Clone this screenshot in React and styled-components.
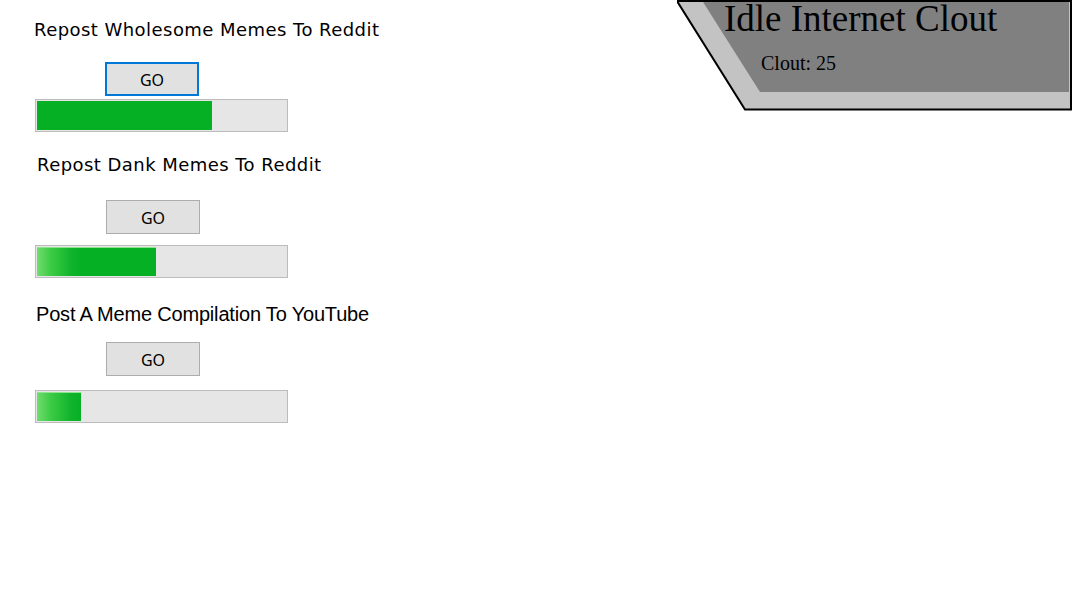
import React from "react";
import styled, { createGlobalStyle } from "styled-components";

const Global = createGlobalStyle`
  html, body { margin: 0; padding: 0; background: #ffffff; }
  body { font-family: "Liberation Serif", serif; }
`;

const Page = styled.div`
  display: flex;
  align-items: flex-start;
  width: 1072px;
  min-height: 603px;
`;

const Column = styled.div`
  display: flex;
  flex-direction: column;
  align-items: flex-start;
  padding-left: 35px;
`;

const Title = styled.div`
  font-family: ${(p) => (p.$comic ? '"Comic Sans MS", "DejaVu Sans", sans-serif' : '"Liberation Sans", Arial, sans-serif')};
  font-size: ${(p) => (p.$comic ? "18px" : "20px")};
  letter-spacing: ${(p) => (p.$comic ? "0.45px" : "-0.18px")};
  line-height: 24px;
  height: 24px;
  color: #000;
  white-space: nowrap;
  margin-top: ${(p) => p.$top}px;
  margin-left: ${(p) => p.$left}px;
`;

const GoButton = styled.button`
  box-sizing: border-box;
  width: 94px;
  height: 34px;
  margin-top: ${(p) => p.$top}px;
  margin-left: ${(p) => p.$left}px;
  padding: 0;
  background: #e1e1e1;
  border: ${(p) => (p.$focused ? "2px solid #0078d7" : "1px solid #adadad")};
  border-radius: 0;
  font-family: "Noto Sans", "Open Sans", sans-serif;
  font-size: 16px;
  line-height: 1;
  padding-top: 1px;
  color: #000;
  cursor: pointer;
`;

const Bar = styled.div`
  box-sizing: border-box;
  position: relative;
  width: 253px;
  height: 33px;
  margin-top: ${(p) => p.$top}px;
  border: 1px solid #bcbcbc;
  padding: 1px;
  background: #e6e6e6;
`;

const Fill = styled.div`
  height: 100%;
  background: ${(p) =>
    p.$glow
      ? "linear-gradient(90deg, #6fdc6f 0px, #3ccb44 14px, #10b42c 34px, #06b025 44px, #06b025 100%)"
      : "#06b025"};
  box-shadow: ${(p) => (p.$glow ? "inset 0 1px 0 #8fe58f" : "none")};
`;

const Header = styled.div`
  position: relative;
  margin-left: auto;
  width: 395px;
  height: 111px;
  box-sizing: border-box;
  padding: 0 0 0 47px;
  font-family: "Liberation Serif", "Times New Roman", serif;
  color: #000;
`;

const HeaderShape = styled.svg`
  position: absolute;
  inset: 0;
  z-index: 0;
`;

const HeaderTitle = styled.div`
  position: relative;
  font-size: 37px;
  line-height: 38px;
  white-space: nowrap;
`;

const Clout = styled.div`
  position: relative;
  font-size: 20px;
  line-height: 22px;
  margin-top: 14px;
  margin-left: 37px;
`;

const tasks = [
  { title: "Repost Wholesome Memes To Reddit", comic: true, titleTop: 18, titleLeft: -1, btnTop: 20, btnLeft: 70, focused: true, barTop: 3, pct: 70.2, glow: false },
  { title: "Repost Dank Memes To Reddit", comic: true, titleTop: 21, titleLeft: 2, btnTop: 23, btnLeft: 71, focused: false, barTop: 11, pct: 47.6, glow: true },
  { title: "Post A Meme Compilation To YouTube", comic: false, titleTop: 24, titleLeft: 1, btnTop: 16, btnLeft: 71, focused: false, barTop: 14, pct: 17.6, glow: true },
];

export default function App() {
  return (
    <>
      <Global />
      <Page>
        <Column>
          {tasks.map((t) => (
            <React.Fragment key={t.title}>
              <Title $comic={t.comic} $top={t.titleTop} $left={t.titleLeft}>
                {t.title}
              </Title>
              <GoButton $top={t.btnTop} $left={t.btnLeft} $focused={t.focused}>
                GO
              </GoButton>
              <Bar $top={t.barTop}>
                <Fill $glow={t.glow} style={{ width: `${t.pct}%` }} />
              </Bar>
            </React.Fragment>
          ))}
        </Column>
        <Header>
          <HeaderShape width="395" height="111" viewBox="0 0 395 111">
            <polygon points="0,1 394,1 394,109.5 68,109.5" fill="#c3c3c3" stroke="#000" strokeWidth="2" />
            <polygon points="26,2 392,2 392,92 83,92" fill="#808080" />
          </HeaderShape>
          <HeaderTitle>Idle Internet Clout</HeaderTitle>
          <Clout>Clout: 25</Clout>
        </Header>
      </Page>
    </>
  );
}
